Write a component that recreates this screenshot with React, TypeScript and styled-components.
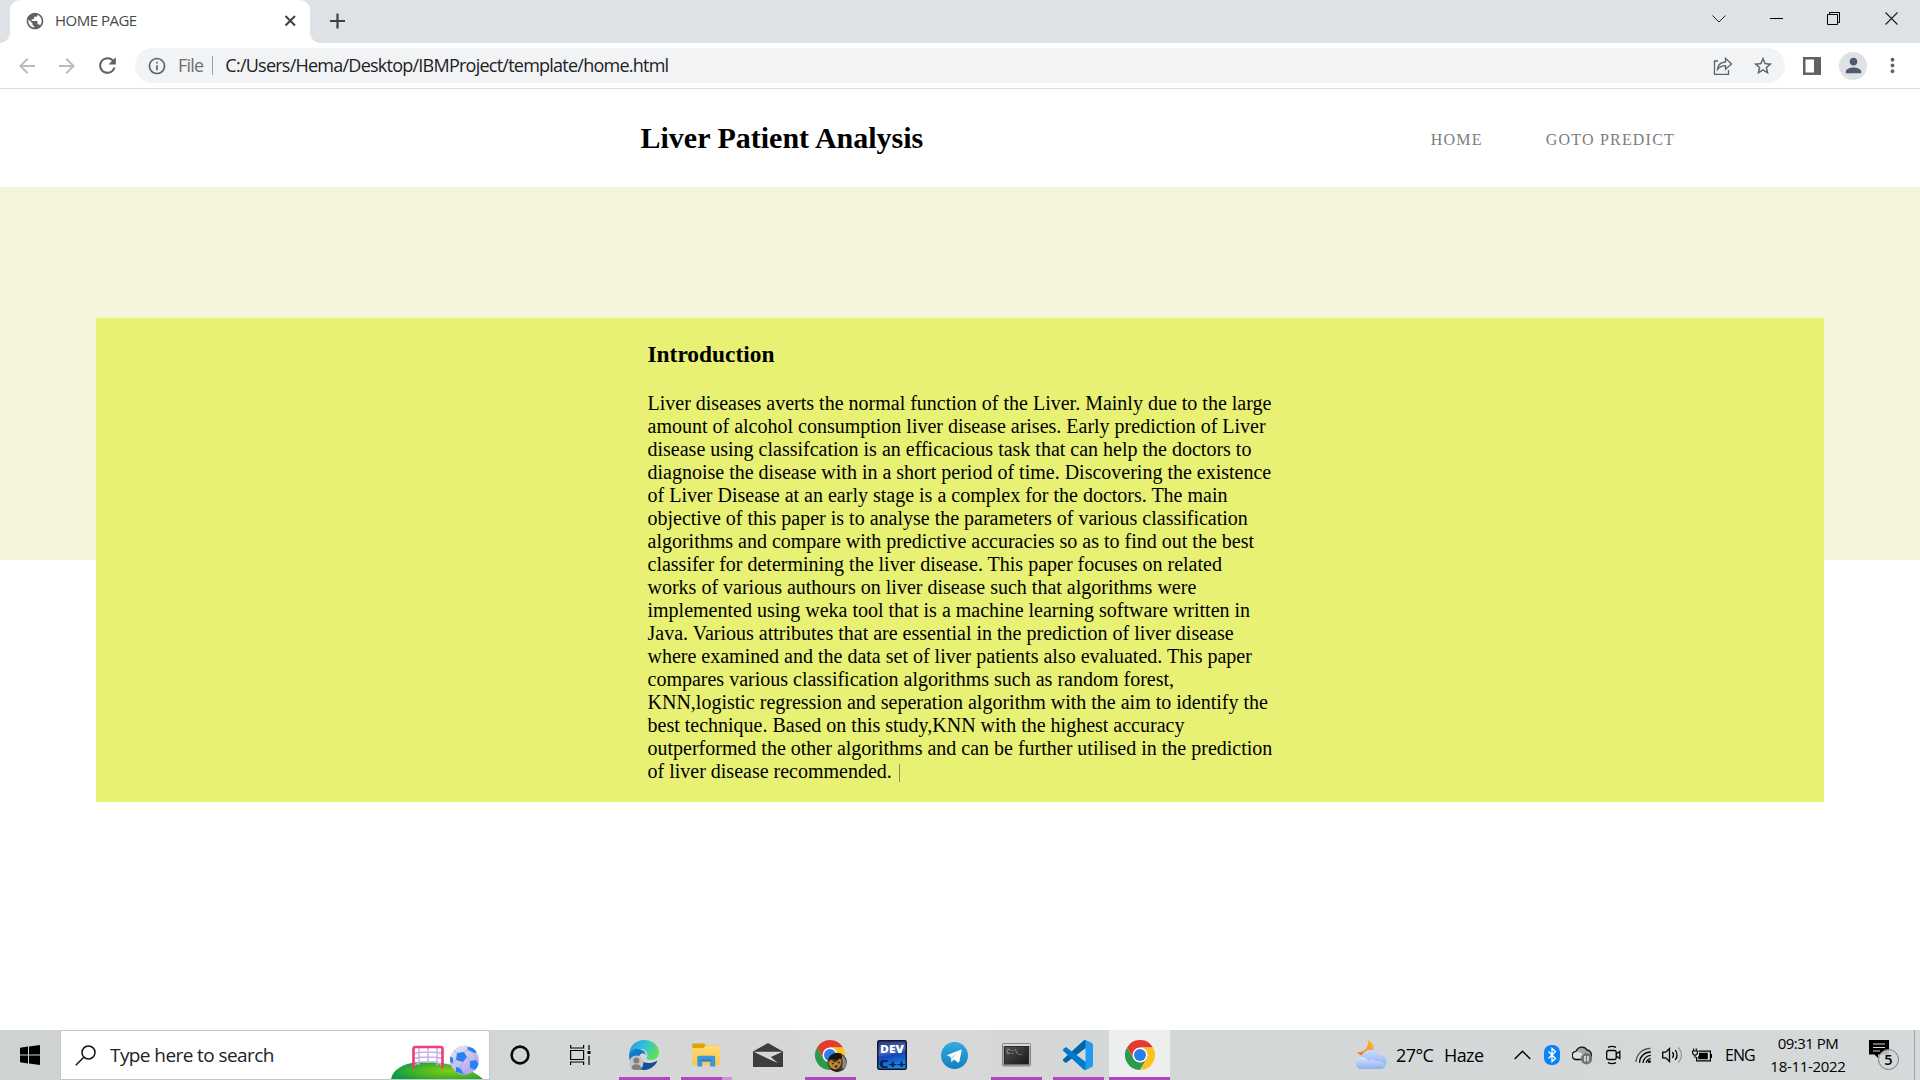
import React from "react";
import styled, { createGlobalStyle } from "styled-components";
import {
  MdPublic,
  MdArrowBack,
  MdArrowForward,
  MdRefresh,
  MdInfoOutline,
  MdStarBorder,
  MdPerson,
  MdMoreVert,
} from "react-icons/md";

const serif = `"Liberation Serif", "Times New Roman", serif`;
const sans = `"Open Sans", "Noto Sans", sans-serif`;

const GlobalStyle = createGlobalStyle`
  * { box-sizing: border-box; }
  html, body { margin: 0; padding: 0; background: #fff; overflow: hidden; }
  svg { display: block; flex: none; }
`;

const Screen = styled.div`
  width: 1920px;
  height: 1080px;
  display: flex;
  flex-direction: column;
  overflow: hidden;
  background: #fff;
`;

/* ---------- browser ---------- */

const TabStrip = styled.div`
  height: 43px;
  display: flex;
  background: #dee1e6;
  padding-left: 10px;
`;

const Tab = styled.div`
  width: 300px;
  height: 43px;
  display: flex;
  align-items: center;
  padding: 0 13px 2px 15px;
  background: #fff;
  border-radius: 10px 10px 0 0;
  position: relative;
  &::before,
  &::after {
    content: "";
    position: absolute;
    bottom: 0;
    width: 10px;
    height: 10px;
  }
  &::before {
    left: -10px;
    background: radial-gradient(circle at 0 0, #dee1e6 9.5px, #fff 10px);
  }
  &::after {
    right: -10px;
    background: radial-gradient(circle at 100% 0, #dee1e6 9.5px, #fff 10px);
  }
`;

const Label = styled.span<{ $size: number; $track?: number; $color?: string; $lh?: number; $indent?: number }>`
  font-family: ${sans};
  font-size: ${(p) => p.$size}px;
  letter-spacing: ${(p) => p.$track ?? 0}px;
  color: ${(p) => p.$color ?? "#000"};
  line-height: ${(p) => p.$lh ?? 24}px;
  margin-left: ${(p) => p.$indent ?? 0}px;
  white-space: pre;
`;

const TabTitle = styled(Label)`
  flex: 1;
  padding-bottom: 2px;
`;

const UrlLabel = styled(Label)`
  padding-bottom: 1px;
`;

const NewTab = styled.div`
  width: 54px;
  display: flex;
  align-items: center;
  justify-content: center;
  padding-bottom: 1px;
`;

const WindowControls = styled.div`
  margin-left: auto;
  display: flex;
  height: 37px;
`;

const WindowButton = styled.div`
  width: 57.4px;
  display: flex;
  align-items: center;
  justify-content: center;
`;

const Toolbar = styled.div`
  height: 46px;
  display: flex;
  align-items: center;
  padding: 0 15px;
  border-bottom: 1px solid #d9dbde;
  background: #fff;
`;

const ToolButton = styled.div<{ $color: string; $width: number }>`
  width: ${(p) => p.$width}px;
  display: flex;
  color: ${(p) => p.$color};
`;

const Omnibox = styled.div`
  width: 1650px;
  height: 35px;
  border-radius: 18px;
  background: #f1f3f4;
  display: flex;
  align-items: center;
  padding: 0 11px 0 12px;
  color: #5f6368;
`;

const Separator = styled.div`
  width: 1px;
  height: 19px;
  background: #9aa0a6;
  margin: 0 11px 0 9px;
`;

const OmniActions = styled.div`
  margin-left: auto;
  display: flex;
  align-items: center;
  gap: 19px;
`;

const RightTools = styled.div`
  display: flex;
  align-items: center;
  padding-left: 18px;
`;

const Avatar = styled.div`
  width: 28px;
  height: 28px;
  border-radius: 50%;
  background: #dee1e6;
  display: flex;
  align-items: center;
  justify-content: center;
  color: #505a6e;
  margin: 0 14px 0 18px;
`;

/* ---------- page ---------- */

const Page = styled.div`
  height: 941px;
  display: flex;
  flex-direction: column;
  font-family: ${serif};
`;

const SiteHeader = styled.header`
  height: 98px;
  display: flex;
  align-items: center;
  padding: 0 245px 0 640.5px;
`;

const SiteTitle = styled.h1`
  margin: 0;
  font-size: 30px;
  line-height: 34px;
  font-weight: bold;
  white-space: nowrap;
`;

const Nav = styled.nav`
  margin-left: auto;
  display: flex;
  gap: 63px;
  padding-top: 3px;
`;

const NavLink = styled.a`
  font-size: 16px;
  line-height: 20px;
  letter-spacing: 1.2px;
  color: #7c7c7c;
  white-space: nowrap;
`;

const Hero = styled.section`
  height: 373px;
  background: #f5f5dc;
  padding: 131px 96px 0;
`;

const Panel = styled.div`
  height: 484px;
  background: #e9f175;
  display: flex;
  flex-direction: column;
  padding: 23px 0 0 551.5px;
`;

const PanelHeading = styled.h3`
  margin: 0 0 24px;
  font-size: 23.4px;
  line-height: 27px;
  font-weight: bold;
`;

const Paragraph = styled.p`
  margin: 0;
  font-size: 20px;
  line-height: 23px;
  color: #000;
`;

const Line = styled.span`
  display: block;
  white-space: nowrap;
`;

const Caret = styled.span`
  display: inline-block;
  width: 1px;
  height: 18px;
  margin-left: 7px;
  vertical-align: -4px;
  background: #9a8a3c;
`;

/* ---------- taskbar ---------- */

const Taskbar = styled.div`
  height: 50px;
  display: flex;
  background: linear-gradient(90deg, #cfd2d3 0, #d3d6d7 500px, #d7d8d7 900px, #d3d7d8 1250px, #d6d9da 100%);
`;

const Start = styled.div`
  width: 60px;
  display: flex;
  align-items: center;
  padding-left: 20px;
`;

const Search = styled.div`
  width: 430px;
  height: 50px;
  border: 1px solid #c4c6c7;
  background: #fff;
  display: flex;
  align-items: center;
  padding-left: 14px;
`;

const SearchArt = styled.div`
  margin-left: auto;
  padding-right: 3px;
`;

const Slot = styled.div<{ $width?: number; $active?: boolean }>`
  width: ${(p) => p.$width ?? 62}px;
  height: 50px;
  display: flex;
  flex-direction: column;
  align-items: center;
  background: ${(p) => (p.$active ? "#edefee" : "transparent")};
`;

const SlotIcon = styled.div`
  height: 47px;
  padding-top: 3px;
  display: flex;
  align-items: center;
`;

const Underline = styled.div<{ $width: number; $split?: boolean }>`
  width: ${(p) => p.$width}px;
  height: 3px;
  background: ${(p) => (p.$split ? "linear-gradient(90deg, #b146c2 41px, #cf92da 41px)" : "#b146c2")};
`;

const Tray = styled.div`
  margin-left: auto;
  display: flex;
  align-items: center;
`;

const TrayItem = styled.div<{ $width: number }>`
  width: ${(p) => p.$width}px;
  display: flex;
`;

const Clock = styled.div`
  width: 76px;
  display: flex;
  flex-direction: column;
  align-items: center;
  margin-right: 23px;
`;

const ShowDesktop = styled.div`
  width: 6px;
  height: 50px;
  border-left: 1px solid #9fa3a5;
`;

const lines = [
  "Liver diseases averts the normal function of the Liver. Mainly due to the large",
  "amount of alcohol consumption liver disease arises. Early prediction of Liver",
  "disease using classifcation is an efficacious task that can help the doctors to",
  "diagnoise the disease with in a short period of time. Discovering the existence",
  "of Liver Disease at an early stage is a complex for the doctors. The main",
  "objective of this paper is to analyse the parameters of various classification",
  "algorithms and compare with predictive accuracies so as to find out the best",
  "classifer for determining the liver disease. This paper focuses on related",
  "works of various authours on liver disease such that algorithms were",
  "implemented using weka tool that is a machine learning software written in",
  "Java. Various attributes that are essential in the prediction of liver disease",
  "where examined and the data set of liver patients also evaluated. This paper",
  "compares various classification algorithms such as random forest,",
  "KNN,logistic regression and seperation algorithm with the aim to identify the",
  "best technique. Based on this study,KNN with the highest accuracy",
  "outperformed the other algorithms and can be further utilised in the prediction",
  "of liver disease recommended.",
];

const ChromeMark = () => (
  <>
    <path fill="#e33b2e" d="M24 12H44.8A24 24 0 0 0 3.2 12L13.6 30L24 24Z" />
    <path fill="#2a9b48" d="M3.2 12A24 24 0 0 0 24 48L34.4 30L24 24L13.6 30Z" />
    <path fill="#fcc31e" d="M44.8 12A24 24 0 0 1 24 48L34.4 30L24 24V12Z" />
    <circle cx="24" cy="24" r="12" fill="#fff" />
    <circle cx="24" cy="24" r="9.6" fill="#2a7ded" />
  </>
);

const ChromeIcon = () => (
  <svg width="30" height="30" viewBox="0 0 48 48"><ChromeMark /></svg>
);

const ChromeProfileIcon = () => (
  <svg width="32" height="32" viewBox="0 0 51.2 51.2" overflow="visible">
    <g transform="translate(1.6 1.6)"><ChromeMark /></g>
    <circle cx="37" cy="37.500" r="15.500" fill="#3b352b" />
    <path fill="#8f8b80" d="M44 25q11 8 6 20l-5 3 1-12z" />
    <path fill="#17130f" d="M23 32q6-12 20-9l2 7-8 3-9-1z" />
    <path fill="#bd8230" d="M23 37l5-4 4 4 5-1 4-5 3 2-1 8-3 5-7 3-6-3-3-4z" />
    <path fill="#1f150c" d="M28 37l4 2-2 2zM38 37l4-1-2 4zM32 43l6-1-2 4zM26 46l8 4 8-2-5 4q-7 0-11-6z" />
  </svg>
);

const EdgeIcon = () => (
  <svg width="30" height="30" viewBox="0 0 30 30">
    <defs>
      <linearGradient id="edgeTop" x1="0" y1="0.2" x2="1" y2="0.6">
        <stop offset="0" stopColor="#1f9be0" />
        <stop offset=".5" stopColor="#2fc6d8" />
        <stop offset="1" stopColor="#63e24b" />
      </linearGradient>
      <linearGradient id="edgeSide" x1="0" y1="0" x2=".7" y2="1">
        <stop offset="0" stopColor="#1683d8" />
        <stop offset="1" stopColor="#0d63b8" />
      </linearGradient>
    </defs>
    <path fill="url(#edgeTop)" d="M0 14C1 5.500 7 0 15 0c9 0 15 6 15 12.500 0 4.500-3.500 7.500-8 7.500-3.500 0-5-1.300-4.300-2.500 1.800-3 .300-7-4.200-8.200C8 7.800 2.500 9.500 0 14z" />
    <path fill="url(#edgeSide)" d="M0 15C1.500 10 6 8 11 9.200c4 .900 6 3.500 5.800 6-.8-2-3-2.700-5-1.300C8 17 9 23 14.500 26c2 1.100 4 1.700 6 1.600C17.500 30.200 12 30.700 8 28.500 2.500 26 0 21 0 15z" />
    <path fill="#124f96" d="M11.500 19c2.500 4 9 5.500 16 1.900.6-.2.900.300.600.800C25.500 26.300 21 29.900 15.500 30c-3.500-2-5-6-4-11z" />
    <circle cx="7.300" cy="22.800" r="7.200" fill="#c8c6c4" />
    <circle cx="7.300" cy="20.600" r="3" fill="#817f7d" />
    <path fill="#817f7d" d="M2.500 28.500c0-3 1.800-4.200 4.800-4.200s4.800 1.200 4.800 4.200c-2.800 2-6.800 2-9.600 0z" />
  </svg>
);

const FolderIcon = () => (
  <svg width="28" height="24" viewBox="0 0 28 24">
    <defs>
      <linearGradient id="folder" x1="0" y1="0" x2="0" y2="1">
        <stop offset="0" stopColor="#ffdc73" />
        <stop offset="1" stopColor="#fcc846" />
      </linearGradient>
    </defs>
    <path fill="#e3a008" d="M1 .5h11l2 2h12.500v5H.300V1z" />
    <path fill="url(#folder)" d="M.3 5h11l2.500-2.500h13q1 0 1 1V21q0 1-1 1H1.300q-1 0-1-1z" />
    <path fill="#3b96dd" d="M5.300 23.500v-9q0-1.700 1.700-1.700h14.500q1.700 0 1.700 1.700v9h-5v-5.300h-8v5.300z" />
    <path fill="#2b7fc9" d="M9 16.500h10.500v2H9z" />
  </svg>
);

const MailIcon = () => (
  <svg width="30" height="24" viewBox="0 0 30 24">
    <path fill="#3d3d3d" d="M0 8.500L15 0l15 8.500V24H0z" />
    <path fill="#d6d7d6" d="M.7 8.700H29.500L17.800 14l7 6L13.500 14.900z" />
  </svg>
);

const DevIcon = () => (
  <svg width="30" height="30" viewBox="0 0 30 30">
    <defs>
      <linearGradient id="dev" x1="0" y1="0" x2=".2" y2="1">
        <stop offset="0" stopColor="#2d3374" />
        <stop offset=".45" stopColor="#4468bd" />
        <stop offset=".6" stopColor="#1645b5" />
        <stop offset="1" stopColor="#168be5" />
      </linearGradient>
    </defs>
    <rect x=".7" y=".7" width="28.600" height="28.600" rx="1.500" fill="url(#dev)" stroke="#10142d" strokeWidth="1.400" />
    <text x="15" y="13" textAnchor="middle" textLength="24" lengthAdjust="spacingAndGlyphs" fontFamily="Open Sans" fontWeight="800" fontSize="10.500" fill="#fff">DEV</text>
    <text x="15.500" y="27.500" textAnchor="middle" textLength="27" lengthAdjust="spacingAndGlyphs" fontFamily="Open Sans" fontWeight="800" fontSize="10.500" fill="#0c1c55">C++</text>
  </svg>
);

const TelegramIcon = () => (
  <svg width="27" height="27" viewBox="0 0 27 27">
    <defs>
      <linearGradient id="tg" x1="0" y1="0" x2="0" y2="1">
        <stop offset="0" stopColor="#35a9df" />
        <stop offset="1" stopColor="#1480be" />
      </linearGradient>
    </defs>
    <circle cx="13.500" cy="13.500" r="13.500" fill="url(#tg)" />
    <path fill="#fff" d="M5.800 13.200L19.600 7.800q1.200-.3 1 1L18.300 19.700q-.4 1.300-1.600.6L13 17.500l-2 1.900q-.8.700-.9-.4l-.4-4z" />
    <path fill="#b9d5e8" d="M10 19.400l.300-4 6.800-5.800-5.500 6.700z" />
  </svg>
);

const TerminalIcon = () => (
  <svg width="29" height="24" viewBox="0 0 29 24">
    <defs>
      <linearGradient id="term" x1="0" y1="0" x2="1" y2="1">
        <stop offset="0" stopColor="#555" />
        <stop offset="1" stopColor="#161616" />
      </linearGradient>
    </defs>
    <rect x=".5" y=".5" width="28" height="22.500" rx="1" fill="#a5a7a8" stroke="#838586" />
    <rect x="2.500" y="3.500" width="24" height="17.500" fill="url(#term)" stroke="#2a2a2a" />
    <path fill="#d8d8d8" d="M1 1h27v2H1z" />
    <text x="4.500" y="11" fontFamily="Liberation Mono" fontSize="6.500" fill="#bbb">C:\_</text>
  </svg>
);

const VsCodeIcon = () => (
  <svg width="30" height="30" viewBox="0 0 100 100">
    <path fill="#0065a9" d="M96.461 10.796L75.857.876C73.472-.273 70.622.212 68.750 2.083L1.299 63.583c-1.815 1.654-1.812 4.511.004 6.162l5.510 5.009c1.485 1.350 3.722 1.449 5.321.236l81.227-61.620C96.086 11.303 100 13.246 100 16.667v-.24c0-2.400-1.375-4.590-3.539-5.631z" />
    <path fill="#007acc" d="M96.461 89.204l-20.604 9.920c-2.385 1.149-5.235.664-7.107-1.207L1.299 36.417c-1.815-1.654-1.812-4.511.004-6.162l5.510-5.009c1.485-1.350 3.722-1.449 5.321-.236l81.227 61.620C96.086 88.697 100 86.754 100 83.333v.24c0 2.400-1.375 4.590-3.539 5.631z" />
    <path fill="#1f9cf0" d="M75.858 99.126c-2.386 1.148-5.236.663-7.108-1.209C71.056 100.223 75 98.590 75 95.328V4.672c0-3.262-3.944-4.895-6.250-2.589 1.872-1.872 4.722-2.357 7.108-1.210l20.601 9.908C98.623 11.822 100 14.011 100 16.413v67.174c0 2.402-1.377 4.592-3.541 5.633z" />
  </svg>
);

const SoccerArt = () => (
  <svg width="95" height="48" viewBox="0 0 95 48">
    <defs>
      <radialGradient id="hill" cx=".62" cy=".5" r=".65">
        <stop offset="0" stopColor="#86cb18" />
        <stop offset=".55" stopColor="#46b525" />
        <stop offset="1" stopColor="#07994a" />
      </radialGradient>
      <linearGradient id="ball" x1="0" y1="0" x2=".6" y2="1">
        <stop offset="0" stopColor="#e6eef2" />
        <stop offset="1" stopColor="#b5a1f2" />
      </linearGradient>
      <clipPath id="ballClip"><circle cx="73.500" cy="29" r="14.500" /></clipPath>
    </defs>
    <path fill="url(#hill)" d="M0 49C1 39 12 31 33 31c24 0 48 6 60 18z" />
    <g fill="none" stroke="#c8b4e8" strokeWidth="1.500">
      <path d="M28 17v17M37 17v15M46 17v17M24 22q13-2 27 0M24 27q13-2 27 0M24 34q4-3 6-3h14q3 0 7 3" />
    </g>
    <path d="M22.500 36.500V18q0-2 2-2h25q2 0 2 2v18.500" fill="none" stroke="#ee3f77" strokeWidth="2.700" strokeLinecap="round" />
    <circle cx="73.500" cy="29" r="14.500" fill="url(#ball)" />
    <g clipPath="url(#ballClip)">
      <path fill="#2482f5" d="M66 22l7-1 3 5-4 5-7-2zM76 16l8 1 3 4-4 1-6-3zM79 30l6-1 3 5-3 5-6-2zM65 36l4 1 4 6-8-2zM59 25l3 2v6l-3-2z" />
      <path fill="none" stroke="#a3a9c8" strokeWidth=".8" d="M73 21l4-2M76 26l3 4M72 31l-3 6M65 29l-4 3M66 22l-4-3M79 37l-6 5M83 22l2 7" />
    </g>
  </svg>
);

const WeatherIcon = () => (
  <svg width="31" height="30" viewBox="0 0 31 30">
    <defs>
      <linearGradient id="cloud" x1="0" y1="0" x2="0" y2="1">
        <stop offset="0" stopColor="#c9defd" />
        <stop offset="1" stopColor="#83a8ec" />
      </linearGradient>
      <linearGradient id="puff" x1="0" y1="0" x2="0" y2="1">
        <stop offset="0" stopColor="#dbe7fd" />
        <stop offset="1" stopColor="#8eaff0" />
      </linearGradient>
      <linearGradient id="moon" x1="1" y1="0" x2="0" y2="1">
        <stop offset="0" stopColor="#fdbf32" />
        <stop offset="1" stopColor="#ed731e" />
      </linearGradient>
    </defs>
    <path fill="url(#moon)" d="M12 0c5 2 7 8 4 12.500C12 17 5 17 1 12.500c7 0 12-4.500 11-12.500z" />
    <path fill="url(#cloud)" d="M6 29a6 6 0 0 1-.5-12A8.800 8.800 0 0 1 22 14.700 7.200 7.200 0 0 1 24.500 29z" />
    <path fill="url(#puff)" d="M6 29a6 6 0 0 1-.500-12q4-.500 7 4 4-3 7 .500 5-2 10.500 3-1.500 4.500-5.500 4.500z" />
  </svg>
);

export default function App() {
  return (
    <Screen>
      <GlobalStyle />
      <TabStrip>
        <Tab>
          <MdPublic size={20} color="#5f6368" />
          <TabTitle $size={15} $track={-0.5} $indent={10} $color="#45494d">HOME PAGE</TabTitle>
          <svg width="14" height="14" viewBox="0 0 14 14"><path d="M2.500 2l9.500 9.500M12 2L2.500 11.500" stroke="#3c4043" strokeWidth="2" /></svg>
        </Tab>
        <NewTab>
          <svg width="16" height="16" viewBox="0 0 16 16"><path d="M8.500 .5v15M1 8h15" stroke="#3c4043" strokeWidth="2.200" /></svg>
        </NewTab>
        <WindowControls>
          <WindowButton><svg width="14" height="8" viewBox="0 0 14 8"><path d="M.5.5L7 7 13.500.5" fill="none" stroke="#222" /></svg></WindowButton>
          <WindowButton><svg width="13" height="13" viewBox="0 0 13 13"><path d="M0 6.500h13" stroke="#000" /></svg></WindowButton>
          <WindowButton><svg width="13" height="13" viewBox="0 0 13 13"><path d="M.5 2.500h10v10H.5zM2.500 2.500v-2h10v10h-2" fill="none" stroke="#000" /></svg></WindowButton>
          <WindowButton><svg width="13" height="13" viewBox="0 0 13 13"><path d="M.5.5l12 12M12.500.5l-12 12" stroke="#222" strokeWidth="1.200" /></svg></WindowButton>
        </WindowControls>
      </TabStrip>
      <Toolbar>
        <ToolButton $width={40} $color="#babcbe"><MdArrowBack size={24} /></ToolButton>
        <ToolButton $width={40} $color="#babcbe"><MdArrowForward size={24} /></ToolButton>
        <ToolButton $width={40} $color="#5f6368"><MdRefresh size={25} /></ToolButton>
        <Omnibox>
          <MdInfoOutline size={20} />
          <UrlLabel $size={17.8} $track={-0.7} $indent={11} $color="#6a6e73">File</UrlLabel>
          <Separator />
          <UrlLabel $size={18} $track={-0.76} $indent={1} $color="#202124">C:/Users/Hema/Desktop/IBMProject/template/home.html</UrlLabel>
          <OmniActions>
            <svg width="20" height="20" viewBox="0 0 20 20" fill="none" stroke="#5f6368" strokeWidth="1.300">
              <path d="M5 5H1.500v13.300h14V14" />
              <path d="M4.500 13.500q.5-7 8-7.500V2.300l6 5.600-6 5.400V9.600q-5 0-8 3.900z" />
            </svg>
            <MdStarBorder size={22} />
          </OmniActions>
        </Omnibox>
        <RightTools>
          <svg width="18" height="18" viewBox="0 0 18 18"><path fill="#5f6368" fillRule="evenodd" d="M0 0h18v18H0zM2.500 2.500v13H11v-13z" /></svg>
          <Avatar><MdPerson size={23} /></Avatar>
          <MdMoreVert size={23} color="#5f6368" />
        </RightTools>
      </Toolbar>

      <Page>
        <SiteHeader>
          <SiteTitle>Liver Patient Analysis</SiteTitle>
          <Nav>
            <NavLink>HOME</NavLink>
            <NavLink>GOTO PREDICT</NavLink>
          </Nav>
        </SiteHeader>
        <Hero>
          <Panel>
            <PanelHeading>Introduction</PanelHeading>
            <Paragraph>
              {lines.map((line, i) => (
                <Line key={line}>
                  {line}
                  {i === lines.length - 1 && <Caret />}
                </Line>
              ))}
            </Paragraph>
          </Panel>
        </Hero>
      </Page>

      <Taskbar>
        <Start>
          <svg width="20" height="20" viewBox="0 0 20 20"><path d="M0 2.700l8-1.100v7.900H0zM9 1.400L20 0v9.500H9zM0 10.500h8v7.900l-8-1.100zM9 10.500h11V20L9 18.600z" /></svg>
        </Start>
        <Search>
          <svg width="21" height="21" viewBox="0 0 21 21" fill="none" stroke="#111" strokeWidth="1.500"><circle cx="13.500" cy="7.500" r="6.500" /><path d="M8.800 12.200L.8 20.200" /></svg>
          <Label $size={19} $track={-0.58} $indent={14} $color="#222">Type here to search</Label>
          <SearchArt><SoccerArt /></SearchArt>
        </Search>
        <Slot $width={60}>
          <SlotIcon><svg width="20" height="20" viewBox="0 0 20 20"><circle cx="10" cy="10" r="8.400" fill="none" stroke="#0a0a0a" strokeWidth="2.600" /></svg></SlotIcon>
        </Slot>
        <Slot $width={63}>
          <SlotIcon>
            <svg width="24" height="20" viewBox="0 0 24 20" fill="none" stroke="#000" strokeWidth="1.200">
              <path d="M.6 5.500h13v9H.6zM.6 0v3h13V0M.6 20v-3h13v3M19 0v5M19 11v9" />
              <path d="M17.500 6h3v3h-3z" fill="#000" stroke="none" />
            </svg>
          </SlotIcon>
        </Slot>
        <Slot><SlotIcon><EdgeIcon /></SlotIcon><Underline $width={51} /></Slot>
        <Slot><SlotIcon><FolderIcon /></SlotIcon><Underline $width={51} $split /></Slot>
        <Slot><SlotIcon><MailIcon /></SlotIcon></Slot>
        <Slot><SlotIcon><ChromeProfileIcon /></SlotIcon><Underline $width={51} /></Slot>
        <Slot><SlotIcon><DevIcon /></SlotIcon></Slot>
        <Slot><SlotIcon><TelegramIcon /></SlotIcon></Slot>
        <Slot><SlotIcon><TerminalIcon /></SlotIcon><Underline $width={51} /></Slot>
        <Slot><SlotIcon><VsCodeIcon /></SlotIcon><Underline $width={51} /></Slot>
        <Slot $width={61} $active><SlotIcon><ChromeIcon /></SlotIcon><Underline $width={61} /></Slot>

        <Tray>
          <TrayItem $width={40}><WeatherIcon /></TrayItem>
          <TrayItem $width={48}><Label $size={18} $track={-0.6}>27°C</Label></TrayItem>
          <TrayItem $width={70}><Label $size={18} $track={-0.6}>Haze</Label></TrayItem>
          <TrayItem $width={30}><svg width="17" height="10" viewBox="0 0 17 10"><path d="M.7 9L8.500 1.200 16.300 9" fill="none" stroke="#000" strokeWidth="1.400" /></svg></TrayItem>
          <TrayItem $width={28}>
            <svg width="16" height="20" viewBox="0 0 16 20"><rect width="16" height="20" rx="7" fill="#0a84f5" /><path d="M4.500 6.500l7 7-3.500 3v-13l3.500 3-7 7" fill="none" stroke="#fff" strokeWidth="1.300" /></svg>
          </TrayItem>
          <TrayItem $width={34}>
            <svg width="21" height="20" viewBox="0 0 21 20">
              <path d="M4.500 14.500a4.100 4.100 0 0 1-.3-8.200A6 6 0 0 1 15 5a4.600 4.600 0 0 1 4.300 5v3z" fill="#a4a4a4" stroke="#111" strokeWidth="1.300" />
              <path d="M4.500 14.500a4 4 0 0 1-.3-8q3-.5 5 1.500l6 3.500-4 3z" fill="#dedede" />
              <path d="M10 14.500H4.500a4.100 4.100 0 0 1-.3-8.200" fill="none" stroke="#111" strokeWidth="1.300" />
              <circle cx="14.500" cy="13.800" r="5.700" fill="#747474" />
              <path d="M13 11v5.600M16 11v5.600" stroke="#fff" strokeWidth="1.300" />
            </svg>
          </TrayItem>
          <TrayItem $width={29}>
            <svg width="15" height="20" viewBox="0 0 15 20" fill="none" stroke="#000" strokeWidth="1.300">
              <rect x=".7" y="5.500" width="9.500" height="9" rx="1.500" /><path d="M10.200 9l3.600-2.500v7L10.200 11M2 2.300q4-2 8 0M2 17.700q4 2 8 0" />
            </svg>
          </TrayItem>
          <TrayItem $width={27}>
            <svg width="17" height="17" viewBox="0 0 17 17" fill="none" stroke="#000" strokeWidth="1.300">
              <path d="M1 15A14 14 0 0 1 15.500 1.500" stroke="#555" /><path d="M4.500 15.800A11 11 0 0 1 15.800 5M8 15.900a8 8 0 0 1 7.800-7.500M11.300 15.900q.5-4 4.500-4.300" /><circle cx="14.300" cy="14.600" r="1.500" fill="#000" stroke="none" />
            </svg>
          </TrayItem>
          <TrayItem $width={30}>
            <svg width="21" height="18" viewBox="0 0 21 18" fill="none" stroke="#000" strokeWidth="1.300">
              <path d="M.7 6.200h3L7.500 2.500v13L3.700 11.800h-3zM10.500 6.200q2 2.800 0 5.600M13.300 4q3.500 5 0 10" /><path d="M16.500 1.500q6 7.500 0 15" stroke="#999" />
            </svg>
          </TrayItem>
          <TrayItem $width={33}>
            <svg width="20" height="15" viewBox="0 0 20 15">
              <path d="M6.500 3.100h11.900v9.800H4.600V9" fill="none" stroke="#000" strokeWidth="1.200" />
              <path d="M7 4.800h8.800v6.500H6.200V8.500L7 7.500z" />
              <path d="M19 6h1v4h-1z" />
              <path d="M.6 3h4.800v2.500L4 7H2L.6 5.500zM1.700 3V.5M4.300 3V.5M3 7v3" fill="none" stroke="#000" strokeWidth="1.100" />
            </svg>
          </TrayItem>
          <TrayItem $width={45}><Label $size={16} $track={-1}>ENG</Label></TrayItem>
          <Clock>
            <Label $size={15} $track={-0.5} $lh={23.5}>09:31 PM</Label>
            <Label $size={15} $track={-0.3} $lh={23.5}>18-11-2022</Label>
          </Clock>
          <TrayItem $width={45}>
            <svg width="31" height="31" viewBox="0 0 31 31">
              <path d="M0 0h20v14.500H9V18L5.500 14.500H0z" />
              <path d="M4 4h12M4 7.500h12M4 11h7" stroke="#d5d8d9" strokeWidth="1.200" />
              <circle cx="19.500" cy="19.500" r="10" fill="#d3d6d7" fillOpacity=".88" stroke="#777" />
              <text x="19.500" y="25" textAnchor="middle" fontFamily="Open Sans" fontWeight="600" fontSize="14.500">5</text>
            </svg>
          </TrayItem>
          <ShowDesktop />
        </Tray>
      </Taskbar>
    </Screen>
  );
}
